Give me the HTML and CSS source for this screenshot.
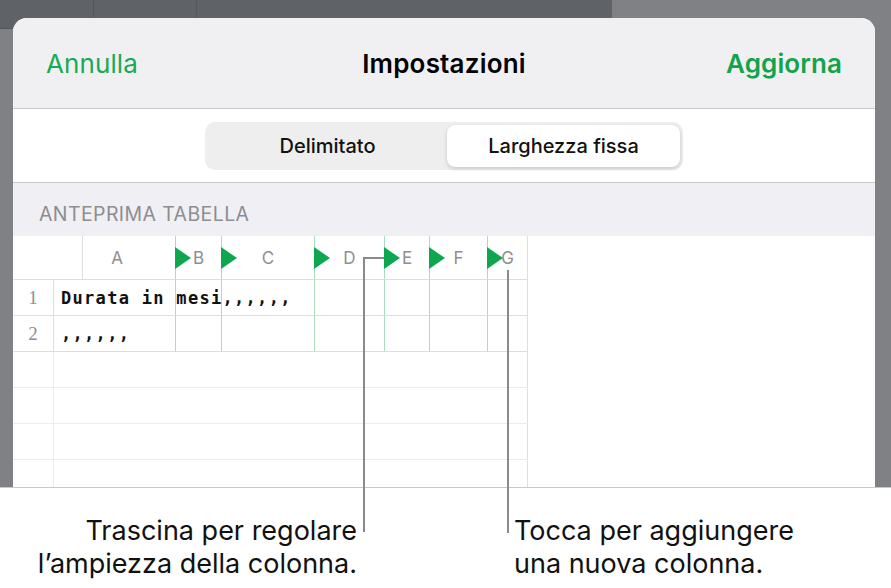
FILE: index.html
```html
<!DOCTYPE html>
<html lang="it">
<head>
<meta charset="utf-8">
<title>Impostazioni</title>
<link rel="stylesheet" href="styles.css">
</head>
<body>
<div class="stage">
  <div class="sheet">
    <header class="bar">
      <span class="btn">Annulla</span>
      <span class="title">Impostazioni</span>
      <span class="btn strong">Aggiorna</span>
    </header>
    <div class="seg-wrap">
      <div class="seg">
        <div class="seg-item">Delimitato</div>
        <div class="seg-item active">Larghezza fissa</div>
      </div>
    </div>
    <div class="section-h">ANTEPRIMA TABELLA</div>
    <div class="table">
      <div class="grid">
        <div class="row head">
          <div class="corner"></div>
          <div class="col col-a">A</div>
          <div class="col mark">B</div>
          <div class="col mark">C</div>
          <div class="col mark">D</div>
          <div class="col mark">E</div>
          <div class="col mark">F</div>
          <div class="col mark last">G</div>
        </div>
        <div class="row data">
          <div class="num">1</div>
          <div class="cell text">Durata in mesi,,,,,,</div>
          <div class="cell guide"></div>
          <div class="cell guide"></div>
          <div class="cell guide"></div>
          <div class="cell guide"></div>
          <div class="cell guide"></div>
          <div class="cell guide last"></div>
        </div>
        <div class="row data">
          <div class="num">2</div>
          <div class="cell text">,,,,,,</div>
          <div class="cell guide"></div>
          <div class="cell guide"></div>
          <div class="cell guide"></div>
          <div class="cell guide"></div>
          <div class="cell guide"></div>
          <div class="cell guide last"></div>
        </div>
        <div class="row empty"><div class="num"></div><div class="span"></div></div>
        <div class="row empty"><div class="num"></div><div class="span"></div></div>
        <div class="row empty"><div class="num"></div><div class="span"></div></div>
        <div class="row empty"><div class="num"></div><div class="span"></div></div>
      </div>
    </div>
  </div>
</div>
<div class="captions">
  <p class="cap cap-left">Trascina per regolare<br>l’ampiezza della colonna.</p>
  <p class="cap cap-right">Tocca per aggiungere<br>una nuova colonna.</p>
</div>
<svg class="callouts" width="891" height="588" viewBox="0 0 891 588" aria-hidden="true">
  <path d="M384 258 H364 V532" fill="none" stroke="#8a8a8c" stroke-width="2"/>
  <path d="M508 270 V533" fill="none" stroke="#8a8a8c" stroke-width="2"/>
</svg>
</body>
</html>
```

FILE: styles.css
```css
* { box-sizing: border-box; }
html, body { margin: 0; padding: 0; }
body {
  width: 891px;
  height: 588px;
  overflow: hidden;
  position: relative;
  background: #ffffff;
  font-family: "Inter", "Liberation Sans", sans-serif;
  color: #000;
}

.stage {
  height: 488px;
  display: flex;
  flex-direction: column;
  padding: 18px 16px 0 13px;
  border-bottom: 1px solid #c9c9cc;
  background-color: #808185;
  background-image:
    linear-gradient(#55585c, #55585c),
    linear-gradient(#55585c, #55585c),
    linear-gradient(#55585c, #55585c),
    linear-gradient(#5f6266, #5f6266);
  background-repeat: no-repeat;
  background-size: 1px 18px, 1px 18px, 13px 1px, 612px 28px;
  background-position: 93px 0, 196px 0, 0 28px, 0 0;
}

.sheet {
  flex: 1;
  display: flex;
  flex-direction: column;
  background: #fff;
  border-radius: 14px 14px 0 0;
  overflow: hidden;
}

.bar {
  height: 91px;
  flex: none;
  display: grid;
  grid-template-columns: 1fr auto 1fr;
  align-items: center;
  padding: 0 33px 0 33px;
  background: #f0f0f2;
  border-bottom: 1px solid #c8c8cc;
}
.btn {
  font-size: 26px;
  color: #17ab54;
  letter-spacing: 0.1px;
}
.btn.strong {
  justify-self: end;
  font-weight: 600;
  color: #13a34c;
}
.title {
  font-size: 26px;
  font-weight: 600;
  letter-spacing: 0.2px;
}

.seg-wrap {
  flex: none;
  height: 74px;
  padding: 13px 0 0 192px;
  border-bottom: 1px solid #c8c8cc;
}
.seg {
  width: 478px;
  height: 48px;
  padding: 3px;
  display: grid;
  grid-template-columns: 239px 233px;
  background: #eeeeef;
  border-radius: 10px;
}
.seg-item {
  display: flex;
  align-items: center;
  justify-content: center;
  font-size: 20px;
  font-weight: 500;
  color: #111;
  border-radius: 8px;
}
.seg-item.active {
  background: #fff;
  box-shadow: 0 2px 4px rgba(0,0,0,0.14), 0 0 1px rgba(0,0,0,0.12);
}

.section-h {
  flex: none;
  height: 53px;
  padding: 20px 0 0 26px;
  background: #f0f0f4;
  font-size: 19.5px;
  line-height: 22px;
  letter-spacing: 0.4px;
  color: #8d8d92;
}

.table {
  flex: 1;
  overflow: hidden;
  background: #fff;
}
.grid {
  width: 515px;
}

.row {
  display: grid;
  grid-template-columns: 41px 121px 46px 93px 70px 45px 58px 41px;
  height: 36px;
  border-bottom: 1px solid #dedee0;
}
.row.head {
  grid-template-columns: 70px 92px 46px 93px 70px 45px 58px 41px;
  height: 44px;
}
.corner {
  border-right: 1px solid #dedee0;
}
.col {
  position: relative;
  display: flex;
  align-items: center;
  justify-content: center;
  font-size: 17px;
  color: #8e8e93;
}
.col-a {
  padding-right: 24px;
}
.col.mark,
.cell.guide {
  border-left: 1px solid #a8ddc0;
}
.col.last,
.cell.last,
.row.empty .span {
  border-right: 1px solid #dedee0;
}
.col.mark::before {
  content: "";
  position: absolute;
  left: -1px;
  top: 11px;
  width: 0;
  height: 0;
  border-left: 16px solid #0ea64f;
  border-top: 11px solid transparent;
  border-bottom: 11px solid transparent;
}

.num {
  display: flex;
  align-items: center;
  justify-content: center;
  border-right: 1px solid #dedee0;
  font-family: "Liberation Serif", serif;
  font-size: 19px;
  color: #8e8e93;
}
.cell.text {
  display: flex;
  align-items: center;
  padding-left: 7px;
  white-space: nowrap;
  overflow: visible;
  position: relative;
  z-index: 1;
  font-family: "DejaVu Sans Mono", monospace;
  font-weight: 700;
  font-size: 17px;
  letter-spacing: 1.3px;
  color: #111;
}

.row.empty {
  grid-template-columns: 41px 474px;
  border-bottom-color: #ececf0;
}
.row.empty .num {
  border-right-color: #ececf0;
}

.captions {
  display: flex;
  padding-top: 26px;
}
.cap {
  margin: 0;
  font-size: 27px;
  line-height: 33px;
  color: #111;
}
.cap-left {
  width: 357px;
  text-align: right;
}
.cap-right {
  margin-left: 157px;
}

.callouts {
  position: absolute;
  left: 0;
  top: 0;
  pointer-events: none;
}
```
